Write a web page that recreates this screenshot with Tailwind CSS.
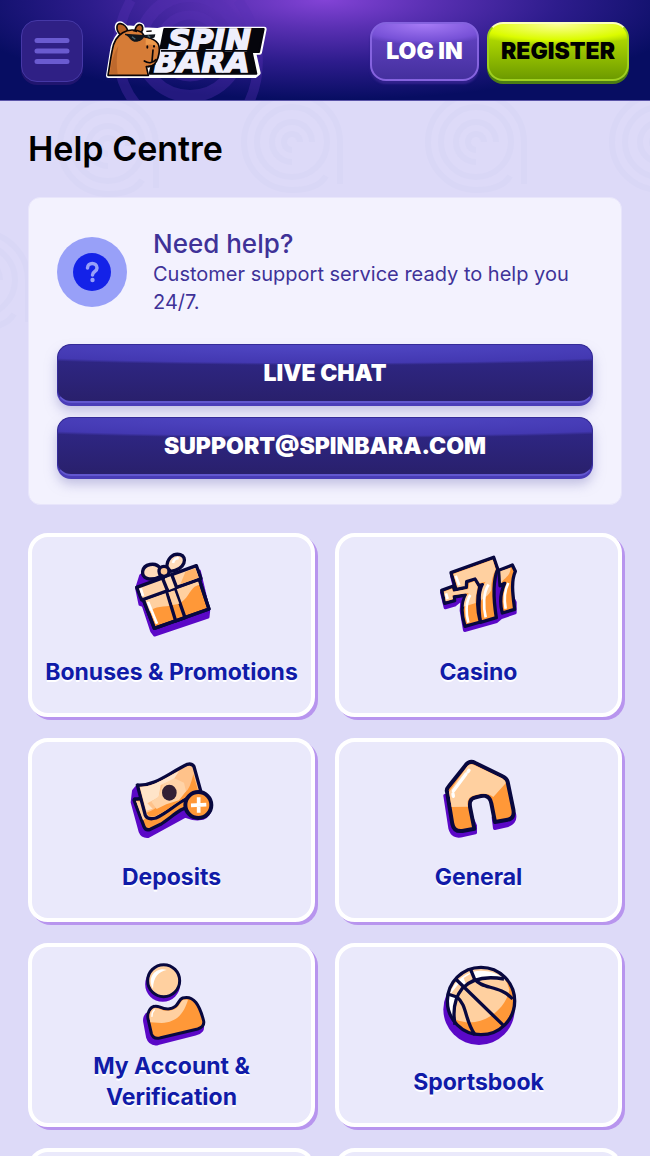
<!DOCTYPE html>
<html lang="en">
<head>
    <meta charset="UTF-8">
    <meta name="viewport" content="width=device-width, initial-scale=1.0">
    <title>Help Centre</title>
    <script src="https://cdn.jsdelivr.net/npm/@tailwindcss/browser@4"></script>
</head>
<body class="relative isolate h-screen overflow-hidden bg-[#dddaf8] font-['Inter',sans-serif]">
    <!-- Background swirls -->
    <svg class="absolute inset-0 -z-10 h-full w-full" fill="none" stroke="#d9d7f6" stroke-width="6" aria-hidden="true">
        <defs>
            <g id="swirl">
                <path d="M48 42V0A48 48 0 1 0 0 48Q26 48 34 34"/>
                <circle r="35"/>
                <path d="M20 0A20 20 0 1 0 0 20M8 0A8 8 0 1 0 0 8"/>
            </g>
        </defs>
        <use href="#swirl" x="108" y="146"/>
        <use href="#swirl" x="292" y="142"/>
        <use href="#swirl" x="476" y="142"/>
        <use href="#swirl" x="660" y="142"/>
        <use href="#swirl" x="-20" y="280"/>
    </svg>

    <!-- Header -->
    <header class="relative isolate flex h-[101px] items-center justify-between overflow-hidden border-b border-[#5a54a8] bg-[#070d62] bg-[radial-gradient(ellipse_58%_100%_at_50%_0%,#8343d6_0%,#5a30b3_28%,#2d1c8c_62%,transparent_100%)] px-[21px] pt-[2px]">
        <svg class="absolute left-[110px] top-0 -z-10 h-[110px] w-40" viewBox="0 0 160 110" fill="none" stroke="#5932b4" stroke-opacity=".35" aria-hidden="true">
            <path stroke-width="10" d="M21 0C-2 40 6 88 34 112M128 0C154 36 152 80 136 108"/>
            <circle cx="80" cy="46" r="50" stroke-width="12"/>
            <circle cx="80" cy="46" r="31" stroke-width="9"/>
        </svg>

        <div class="flex items-center gap-[22px]">
            <button type="button" aria-label="Menu" class="flex h-[62px] w-[62px] items-center justify-center rounded-2xl border border-[#4538a6] bg-[#2f2085] shadow-[0_3px_0_#20156f]">
                <svg class="h-8 w-9" viewBox="0 0 36 32" fill="none" stroke="#6a5bd0" stroke-width="5" stroke-linecap="round">
                    <path d="M3 5.500h30M3 16h30M3 26.500h30"/>
                </svg>
            </button>

            <a href="#" aria-label="Spinbara" class="pb-1">
                <svg class="h-[61px] w-[164px]" viewBox="316 50 492 183">
                    <g fill="#fff" stroke="#fff" stroke-width="14" stroke-linejoin="round">
                        <path d="M326 220L338 145C340 120 352 105 362 92C346 78 352 60 364 64L380 76L408 78C414 62 430 64 428 82L475 84L492 80H794L780 150H762L776 212L766 220Z"/>
                    </g>
                    <path fill="#05050c" stroke="#05050c" stroke-width="6" stroke-linejoin="round" d="M494 80H792L778 149H756L770 214H450L465 150H480Z"/>
                    <g class="font-['DejaVu_Sans',sans-serif]" font-weight="700" font-style="italic" font-size="93" fill="#eeeefc" stroke="#eeeefc" stroke-width="5" paint-order="stroke">
                        <text x="506" y="145">SPIN</text>
                        <text x="463" y="210">BARA</text>
                    </g>
                    <path stroke="#05050c" stroke-width="5" d="M484 145.500H766"/>
                    <g stroke="#0a0508" stroke-width="5" stroke-linejoin="round" stroke-linecap="round">
                        <path fill="#b96022" d="M361 96C347 82 350 61 363 64C374 66 382 76 384 85M406 84C410 64 426 61 429 76C430 85 424 91 418 94"/>
                        <path fill="#d67c37" d="M325 219C330 190 333 165 338 142C342 117 354 100 369 91C385 81 408 80 426 90L436 104C452 107 468 112 475 124C482 137 479 153 475 166C470 184 456 194 440 193L446 219Z"/>
                        <path fill="none" d="M460 143L457 177M434 176C446 184 460 182 469 172M446 193C454 192 461 190 466 185"/>
                    </g>
                    <path fill="#ee9a4b" d="M438 108C458 111 473 120 475 134C468 128 452 124 438 128Z"/>
                    <path fill="#9a4d1f" d="M331 214C335 178 344 148 356 132C350 160 350 190 354 215Z" opacity=".4"/>
                    <ellipse cx="443" cy="134" rx="3" ry="5" fill="#0a0508"/>
                    <ellipse cx="463" cy="132" rx="3" ry="4" fill="#0a0508"/>
                    <path fill="#10151c" d="M376 94L432 98L467 96L465 105Q456 112 442 106L434 102C430 115 410 123 399 116C389 111 389 102 376 98Z"/>
                    <path stroke="#486772" stroke-width="4" d="M397 103L407 111M444 100L452 105"/>
                    <path stroke="#0a0508" stroke-width="4" d="M400 85L412 88M440 87L456 86"/>
                </svg>
            </a>
        </div>

        <div class="flex items-center gap-2 text-[23px] font-black">
            <button type="button" class="h-[59px] w-[109px] whitespace-nowrap rounded-2xl border-2 border-[#8563df] bg-[#4930a7] bg-[radial-gradient(ellipse_75%_38%_at_50%_0%,#a77bf6_0%,#7751d7_80%,transparent_100%),linear-gradient(#6845c8,#44309e)] text-white shadow-[0_3px_2px_#30218c]">LOG IN</button>
            <button type="button" class="h-[59px] w-[142px] whitespace-nowrap rounded-2xl border-2 border-[#9fd01f] border-t-[#fbffbc] bg-[#7aad00] bg-[radial-gradient(ellipse_75%_38%_at_50%_0%,#fdff9a_0%,#dcfc00_75%,transparent_100%),linear-gradient(#c5ed00,#6d9b00)] text-black shadow-[0_3px_0_#4c7d14]">REGISTER</button>
        </div>
    </header>

    <main class="px-7">
        <h1 class="pt-6 text-[34px] font-semibold leading-12 text-black">Help Centre</h1>

        <!-- Support card -->
        <section class="mt-6 rounded-xl border border-[#e8e5fb] bg-[#f3f2fe] px-7 pb-7 pt-[30px]">
            <div class="flex items-center gap-[26px]">
                <svg class="size-[70px] shrink-0" viewBox="0 0 70 70" aria-hidden="true">
                    <circle cx="35" cy="35" r="35" fill="#98a0f8"/>
                    <circle cx="35" cy="35" r="19" fill="#1422e8"/>
                    <path d="M30.500 31C30.500 25 40 25 40 31C40 35 35.500 34 35.500 38" fill="none" stroke="#98a0f8" stroke-width="3.500" stroke-linecap="round"/>
                    <circle cx="35.500" cy="43" r="2.200" fill="#98a0f8"/>
                </svg>
                <div class="text-[#3f3298]">
                    <h2 class="text-[26px] font-medium leading-8">Need help?</h2>
                    <p class="text-[20px] leading-7">Customer support service ready to help you 24/7.</p>
                </div>
            </div>
            <div class="mt-7 flex flex-col gap-[14px] text-[23px] font-black text-white">
                <button type="button" class="h-[59px] rounded-[14px] border border-[#352b98] border-b-2 border-b-[#6257cf] bg-[#2a2170] bg-[radial-gradient(ellipse_85%_36%_at_50%_0%,#5047c4_0%,#4338b1_88%,transparent_100%),linear-gradient(#30288b,#29206c)] shadow-[0_3px_0_#4a3db8,0_8px_12px_#8c89c580]">LIVE CHAT</button>
                <button type="button" class="h-[59px] rounded-[14px] border border-[#352b98] border-b-2 border-b-[#6257cf] bg-[#2a2170] bg-[radial-gradient(ellipse_85%_36%_at_50%_0%,#5047c4_0%,#4338b1_88%,transparent_100%),linear-gradient(#30288b,#29206c)] shadow-[0_3px_0_#4a3db8,0_8px_12px_#8c89c580]">SUPPORT@SPINBARA.COM</button>
            </div>
        </section>

        <!-- Topics -->
        <nav aria-label="Help topics" class="mt-7 grid grid-cols-2 gap-x-5 gap-y-[21px] text-center text-[23px] font-bold leading-[31px] text-[#101ba8] text-shadow-[0_2px_0_#fff]">
            <a href="#" class="flex min-h-[184px] flex-col items-center rounded-[20px] border-4 border-white bg-[#eae9fb] pt-1 shadow-[3px_3px_0_#b895ee]">
                <svg class="size-[100px]" viewBox="6 6 300 300" stroke-linejoin="round">
                    <path fill="#5b08c7" stroke="#5b08c7" stroke-width="9" d="M50 148L62 110L80 95L120 120L238 96L266 215L264 234L104 288L95 276L70 200L60 196Z"/>
                    <g stroke="#08083f" stroke-width="10">
                        <path fill="#ff9838" d="M70 182L238 122L267 210L103 268Z"/>
                        <path fill="#ffd0a0" stroke="none" d="M74 184L236 126L240 138C205 140 210 190 162 198C130 205 105 200 88 218Z"/>
                        <path fill="#ff9838" d="M140 157L165 150L195 236L167 246Z"/>
                        <path fill="#ffd0a0" stroke="none" d="M145 160L163 154L178 194L158 198Z"/>
                        <path fill="#ffd4aa" d="M50 145L229 80L243 119L65 183Z"/>
                        <path fill="#ffb267" stroke="none" d="M196 99L226 88L236 116L181 136Z"/>
                        <path fill="#ffdcb8" stroke="none" d="M135 118L154 111L167 145L147 153Z"/>
                        <path fill="none" d="M128 119L143 156M156 109L170 146"/>
                        <path fill="#ffdcba" d="M120 113C88 128 65 117 68 97C71 76 106 66 122 89ZM141 86C139 60 159 41 181 47C203 54 197 91 152 97Z"/>
                        <circle cx="132" cy="97" r="15" fill="#ffc893"/>
                        <path fill="none" d="M70 182L103 268L267 210L238 122"/>
                    </g>
                    <path fill="none" stroke="#fff" stroke-width="8" d="M84 188L111 254M62 148L69 171M159 72C161 62 169 57 176 58"/>
                </svg>
                <span class="flex min-h-[62px] items-center">Bonuses &amp; Promotions</span>
            </a>

            <a href="#" class="flex min-h-[184px] flex-col items-center rounded-[20px] border-4 border-white bg-[#eae9fb] pt-1 shadow-[3px_3px_0_#b895ee]">
                <svg class="size-[100px]" viewBox="-3 6 300 300" stroke-linejoin="round">
                    <path fill="#5b08c7" stroke="#5b08c7" stroke-width="10" d="M35 160L46 206L74 198L96 180L94 215L104 274L200 247L214 235L255 221V190L192 70L65 110L75 150Z"/>
                    <g stroke="#08083f" stroke-width="10">
                        <path fill="#ff9838" d="M207 94L247 78L256 97C242 128 249 170 254 211L217 222C207 186 214 155 224 133L210 140Z"/>
                        <path fill="#ffd0a0" stroke="none" d="M211 97L242 86C242 112 218 120 215 131L213 133Z"/>
                        <path fill="#ff9838" d="M63 101L191 55L203 90C187 130 190 180 199 236L151 250C144 200 147 162 158 137L125 148L128 160L80 158Z"/>
                        <path fill="#ffd0a0" stroke="none" d="M70 105L188 62L197 91C187 111 183 133 184 153C176 171 162 176 153 185C151 160 158 142 167 128L122 139L117 152L84 151Z"/>
                        <path fill="#ff9838" d="M35 154L70 141L73 153L109 145L110 128L135 120L149 143C140 180 142 217 151 249L105 262C93 225 95 191 106 168L72 174L74 185L44 193Z"/>
                        <path fill="#ffd0a0" stroke="none" d="M42 158L66 149L69 158L115 150L117 133L133 127L143 143C137 170 136 183 137 192L101 203C103 181 109 168 117 162L67 169L69 180L47 187Z"/>
                    </g>
                    <path fill="none" stroke="#fff" stroke-width="8" d="M77 110L88 139M48 163L53 180M121 168C106 190 108 226 115 251M176 137C159 160 160 205 167 235M235 132C222 158 222 183 227 209"/>
                </svg>
                <span class="flex min-h-[62px] items-center">Casino</span>
            </a>

            <a href="#" class="flex min-h-[184px] flex-col items-center rounded-[20px] border-4 border-white bg-[#eae9fb] pt-1 shadow-[3px_3px_0_#b895ee]">
                <svg class="size-[100px]" viewBox="6 -9 300 300" stroke-linejoin="round" stroke-linecap="round">
                    <path fill="#5b08c7" stroke="#5b08c7" stroke-width="12" d="M42 126L50 116L240 150L268 186C258 216 220 210 195 200L84 261C71 262 65 256 62 248L38 160Z"/>
                    <g stroke="#08083f" stroke-width="10">
                        <path fill="#ff9838" d="M42 153Q43 148 52 150L205 130L214 172C180 175 154 207 122 226L91 241Q77 246 72 233Z"/>
                        <path fill="#ffd0a0" stroke="none" d="M48 156L63 158L82 205L69 214Z"/>
                        <path fill="#ffc28a" d="M52 108C105 112 147 72 202 46Q216 42 222 53L245 136C190 139 159 182 108 207Q83 214 76 199Z"/>
                    </g>
                    <path fill="#ff9838" d="M80 191C118 180 151 132 187 133C208 132 216 90 220 76L236 131C190 137 153 181 106 201Q86 207 80 191Z"/>
                    <path fill="#ffe4c9" d="M60 115C105 112 141 84 177 67L158 95L122 108L116 145L82 163L98 179L79 185Z"/>
                    <path fill="#ffd3a7" d="M130 104L163 88L192 101L198 127L177 154L139 166L110 180L94 158L115 143Z"/>
                    <ellipse cx="148" cy="131" rx="22" ry="24" fill="#322035"/>
                    <circle cx="235" cy="168" r="39" fill="#ff9838" stroke="#08083f" stroke-width="12"/>
                    <path fill="none" stroke="#fff" stroke-width="11" stroke-linecap="butt" d="M236 145V191M213 169L259 167"/>
                </svg>
                <span class="flex min-h-[62px] items-center">Deposits</span>
            </a>

            <a href="#" class="flex min-h-[184px] flex-col items-center rounded-[20px] border-4 border-white bg-[#eae9fb] pt-1 shadow-[3px_3px_0_#b895ee]">
                <svg class="size-[100px]" viewBox="-3 -9 300 300" stroke-linejoin="round">
                    <path fill="#5b08c7" stroke="#5b08c7" stroke-width="10" d="M45 140L60 238Q68 268 99 259L136 251V230L100 150ZM190 205L194 238L234 229Q259 218 253 194L225 180Z"/>
                    <path fill="#ff9838" stroke="#08083f" stroke-width="12" d="M51 128Q48 121 57 111L108 47Q120 33 136 42L219 83Q230 88 233 99L250 181Q255 208 233 212L195 219L184 163C178 134 155 138 137 145C117 149 118 164 121 179L133 239L97 246Q72 249 67 225Z"/>
                    <path fill="#ffd0a0" d="M57 129L112 52Q121 42 132 48L216 88Q226 94 227 103L190 144C175 131 153 132 134 139C113 144 111 158 114 173L65 174Z"/>
                    <path fill="none" stroke="#fff" stroke-width="10" stroke-linecap="round" d="M70 126L108 75M114 68L117 64M69 135L70 142"/>
                </svg>
                <span class="flex min-h-[62px] items-center">General</span>
            </a>

            <a href="#" class="flex min-h-[184px] flex-col items-center rounded-[20px] border-4 border-white bg-[#eae9fb] pt-1 shadow-[3px_3px_0_#b895ee]">
                <svg class="size-[100px]" viewBox="-24 -12 300 300" stroke-linejoin="round">
                    <g fill="#5b08c7" stroke="#5b08c7" stroke-width="9">
                        <circle cx="98" cy="88" r="48"/>
                        <path d="M50 178Q42 188 44 200L53 248Q60 270 84 266L196 237Q222 231 217 210L80 176Z"/>
                    </g>
                    <circle cx="101" cy="77" r="48" fill="#ffd0a0" stroke="#08083f" stroke-width="9"/>
                    <path fill="#fff" d="M69 101C48 65 81 35 110 45C86 50 70 65 69 101Z"/>
                    <path fill="#ff9838" stroke="#08083f" stroke-width="9" d="M54 191C51 173 60 157 73 154C87 150 92 163 115 162C147 159 143 134 158 129C192 120 209 151 221 198Q224 216 203 222L89 249Q69 253 64 235Z"/>
                    <path fill="#ffd0a0" d="M59 191C57 174 64 160 76 159C91 160 98 170 119 167C151 162 149 137 161 134L174 134C165 164 148 202 95 204L61 202Z"/>
                    <path fill="none" stroke="#fff" stroke-width="4" stroke-linecap="round" d="M66 184Q65 172 73 165"/>
                </svg>
                <span class="flex min-h-[62px] items-center">My Account &amp;<br>Verification</span>
            </a>

            <a href="#" class="flex min-h-[184px] flex-col items-center rounded-[20px] border-4 border-white bg-[#eae9fb] pt-1 shadow-[3px_3px_0_#b895ee]">
                <svg class="size-[100px]" viewBox="-3 -12 300 300" stroke-linejoin="round">
                    <circle cx="147" cy="163" r="107" fill="#5b08c7"/>
                    <circle cx="153" cy="138" r="101" fill="#ff9838"/>
                    <path fill="#ffd0a0" d="M61 175C31 91 91 29 158 37C201 40 232 70 238 105C224 173 143 224 76 193Z"/>
                    <path fill="#fff" d="M60 116C73 75 109 49 151 47C188 47 214 61 227 77C195 64 155 67 134 73C102 85 84 111 80 130C68 155 71 180 73 203C52 174 49 143 60 116Z"/>
                    <path fill="#ffd0a0" d="M86 86L101 98L79 128L60 119ZM101 69L124 55L132 73L108 88Z"/>
                    <g fill="none" stroke="#08083f" stroke-width="10">
                        <circle cx="153" cy="138" r="101"/>
                        <path d="M77 72L221 212M122 44L134 73C157 103 210 90 248 132M53 117L81 126C112 151 104 197 135 239"/>
                        <path d="M75 209C68 169 74 129 97 100C123 73 159 61 222 72"/>
                    </g>
                </svg>
                <span class="flex min-h-[62px] items-center">Sportsbook</span>
            </a>

            <a href="#" aria-label="More topics" class="min-h-[184px] rounded-[20px] border-4 border-white bg-[#eae9fb] shadow-[3px_3px_0_#b895ee]"></a>
            <a href="#" aria-label="More topics" class="min-h-[184px] rounded-[20px] border-4 border-white bg-[#eae9fb] shadow-[3px_3px_0_#b895ee]"></a>
        </nav>
    </main>
</body>
</html>
